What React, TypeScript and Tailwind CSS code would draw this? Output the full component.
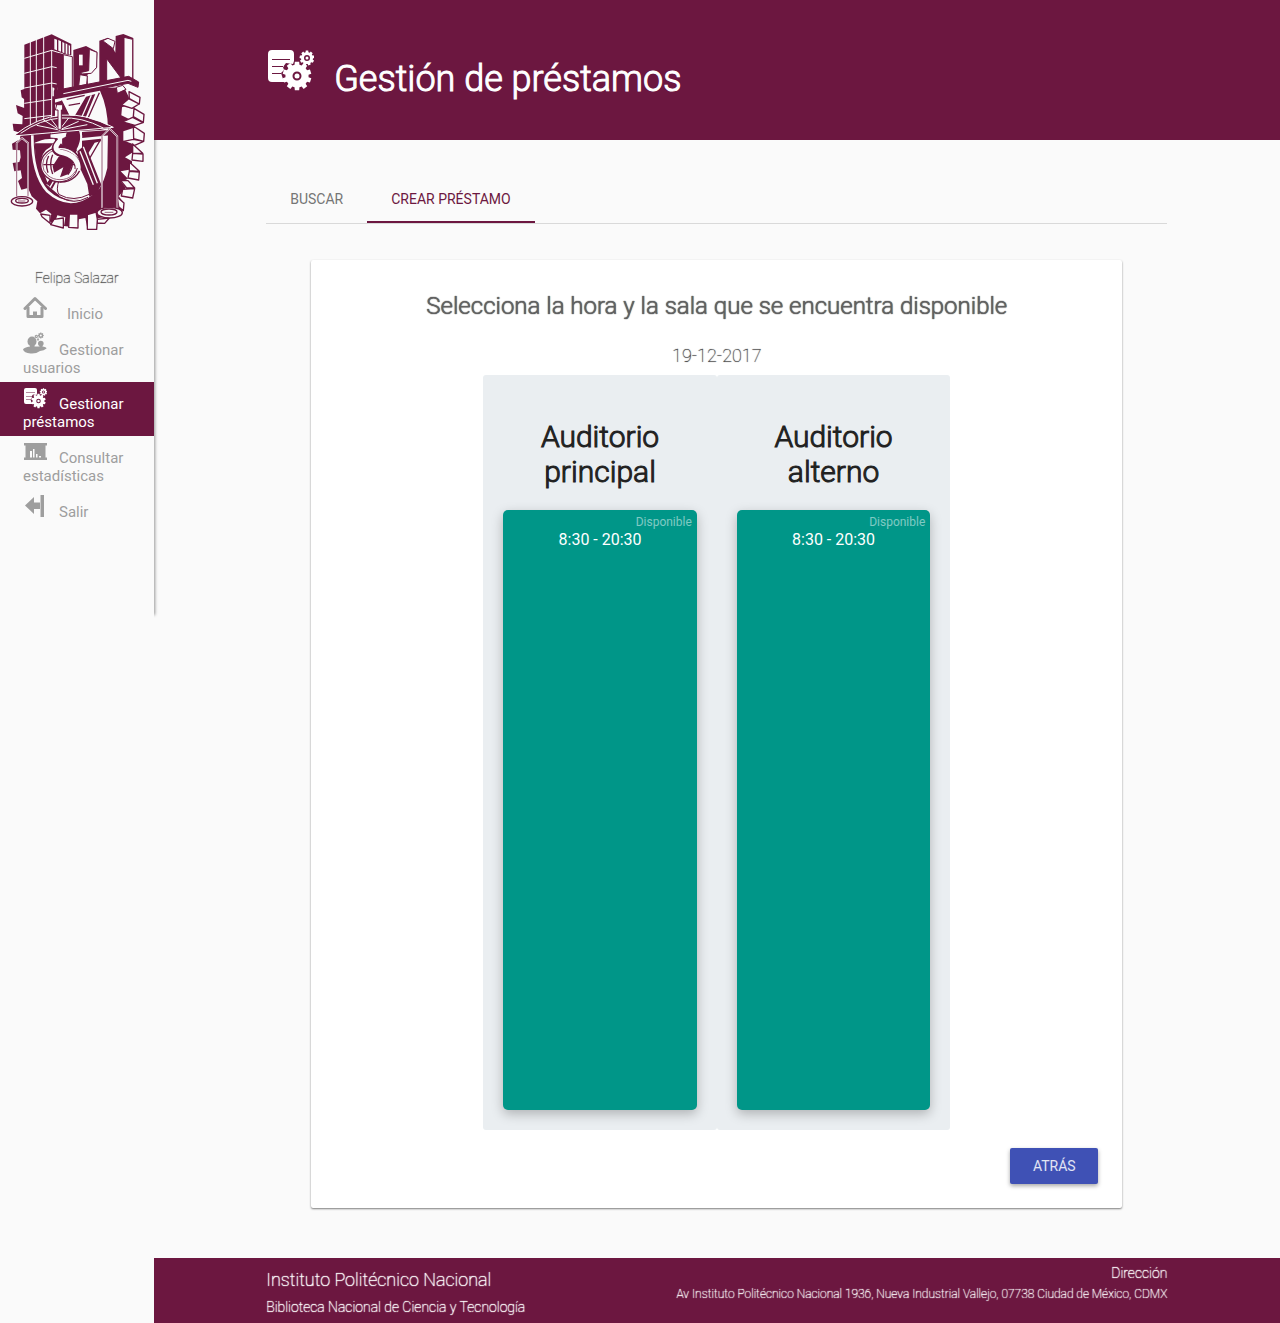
import type { ReactNode } from "react";

const WINE = "#6c1740";
const PAPER = "#fafafa";

/* Institute crest: tower, lettering, gear and balance. */
function Crest() {
  return (
    <svg viewBox="0 0 450 630" className="block w-[150px]" role="img" aria-label="IPN" strokeLinejoin="round">
      {/* gear body */}
      <path
        fill={WINE}
        d="M73 183 62 187 65 208 73 214V240L48 231 53 256 68 264 67 289 38 287 41 308 62 315 60 334 36 347 38 365 60 367 62 388 58 402 38 405 43 430 62 427 66 450 54 459 64 485 84 480 95 505 112 520 108 542 120 556 138 545 154 558 149 580 163 588 172 562 196 568 192 594 232 599 236 574 256 570 262 602 288 604 286 572 310 568 330 560 366 550 372 525 356 505 378 480 364 462 384 452 362 430 396 424 396 400 375 388 400 372 398 345 370 338 370 310 400 300 398 278 364 262 366 238 392 228 386 206 372 178 310 180 165 205Z"
      />
      {/* gear teeth, side faces */}
      <g fill={PAPER} stroke={WINE} strokeWidth="4">
        <path d="M387 191 420 208 418 228 388 212ZM386 212 417 228 396 241 364 231ZM402 241 432 259 430 283 400 266ZM398 268 429 284 405 292 368 282ZM400 294 433 316 431 340 401 332ZM400 334 431 340 404 352 371 340ZM398 376 429 378 429 400 396 396ZM398 348 428 376 398 376ZM388 402 418 430 388 428ZM388 430 418 432 416 456 384 450ZM362 458 384 458 404 480 380 480ZM368 484 404 482 398 510 364 504ZM352 508 372 525 370 548 356 536Z" />
        <path d="M122 558 150 562 150 586 126 566ZM162 574 190 570 190 600 152 590ZM208 558 234 558 234 600 206 598ZM262 560 288 552 292 574 290 604 262 604ZM292 574 328 570 314 586 292 585Z" />
      </g>
      {/* shield field */}
      <path fill={PAPER} d="M165 214 300 188Q324 240 324 306L322 420Q312 462 298 482L268 500Q220 520 176 500L140 470Q108 420 104 344L165 322Z" />
      <path fill={WINE} d="M104 346H160L150 358Q124 370 122 410L145 470 130 466Q106 420 104 346ZM104 316 160 318 160 332 104 336ZM246 312 330 306 330 322 246 330ZM246 338 302 332V340L284 344 262 380 246 362Z" />
      <path fill="none" stroke={PAPER} strokeWidth="8" d="M97 322Q96 440 142 490 208 550 277 496" />
      {/* ribbons inside the shield */}
      <path fill={WINE} d="M258 206 286 198 248 290 212 284ZM164 224 184 218 214 274 186 276ZM160 318 234 300Q252 330 228 372L244 400 176 380ZM232 370 256 350 304 470 290 496 268 506 262 468 240 420ZM140 466 168 430 178 444 156 484Z" />
      <path fill="none" stroke={PAPER} strokeWidth="6" d="M226 282Q258 322 232 366" />
      <path fill="none" stroke={WINE} strokeWidth="4" d="M298 194 258 284M184 218 210 270H236L264 208M200 214 254 202M206 232 240 226M302 334 266 396 298 470" />
      <path fill="none" stroke={PAPER} strokeWidth="4" d="M274 202 238 284M250 356 292 466M240 370 280 470M150 478 172 440" />
      <path fill={PAPER} d="M188 456Q176 488 178 504 218 528 264 504 268 476 242 442Z" />
      <path fill="none" stroke={WINE} strokeWidth="3" d="M178 454Q166 488 178 500 220 524 270 498M182 508Q220 532 264 508" />
      {/* tower */}
      <path fill={WINE} d="M73 50 155 19 214 48V82L188 78 172 190 163 205V318L73 316Z" />
      <path fill="none" stroke={PAPER} strokeWidth="3" d="M91 42V316M109 35V316M131 26V316M155 66V318M73 91 155 67 190 78M73 136 155 116 170 119M73 180 155 165 170 168M73 226 155 214M73 272 155 262" />
      <path fill={PAPER} d="M163 32 171 35V67L163 64ZM175 36 183 40V71L175 68ZM187 42 193 45V76L187 73ZM197 46 202 49V78L197 77ZM206 51 210 53V80L206 79ZM157 178 163 180V205H157Z" />
      {/* lettering */}
      <path fill={WINE} d="M172 75 190 78V184L172 190ZM220 66 258 54 292 72 290 120 262 140 264 172 220 182ZM298 38 324 29 346 74 347 24 370 18 400 30V154L298 164Z" />
      <path fill={PAPER} stroke={WINE} strokeWidth="3" d="M190 80 217 86V180L190 186ZM268 64 291 73 290 118 274 136 246 138 240 134 266 128ZM240 140 262 144 260 170 236 174ZM372 28 398 34V158L372 150ZM320 92 366 154 320 164ZM308 38 324 31 345 40 340 62Z" />
      <path fill={PAPER} d="M237 80H248V112H237Z" />
      <path fill={WINE} stroke={WINE} strokeWidth="3" d="M163 188 386 145 416 162 414 178 384 166 163 210Z" />
      <path fill="none" stroke={PAPER} strokeWidth="3" d="M190 197 384 157 394 160" />
      <path fill={PAPER} stroke={WINE} strokeWidth="3" d="M349 178 368 172 378 184 352 196Z" />
      {/* balance */}
      <path fill={WINE} d="M44 322Q180 216 336 298L300 306 180 312Z" />
      <path fill="none" stroke={PAPER} strokeWidth="3" d="M40 324Q180 212 340 298L178 312ZM62 316Q180 232 310 300M178 306 128 274M178 306 152 272M178 306 206 270M178 306 236 280M178 306 110 292M178 306 262 290" />
      <path fill={PAPER} stroke={WINE} strokeWidth="3" d="M170 230H188V246H184V304H174V246H166ZM150 318 202 312 198 328 188 332V350H172V332L150 330Z" />
      <path fill="none" stroke={PAPER} strokeWidth="5" d="M50 505V345L66 330 84 345V505M306 540V325L329 302 352 325V540" />
      <path fill="none" stroke={WINE} strokeWidth="2" d="M50 505V345L66 330 84 345V505M306 540V325L329 302 352 325V540" />
      {/* globe */}
      <ellipse cx="182" cy="410" rx="60" ry="52" fill={PAPER} stroke={WINE} strokeWidth="4" />
      <ellipse cx="180" cy="410" rx="52" ry="45" fill="none" stroke={WINE} strokeWidth="2" />
      <path fill={WINE} d="M176 386 200 372 224 392 206 438 180 448 190 418 162 434 158 414Z" />
      <path fill="none" stroke={WINE} strokeWidth="4" d="M130 410H232M146 384Q134 406 144 434M158 380Q146 406 158 438M210 392Q226 412 204 440" />
      {/* serpent */}
      <path fill="none" stroke={WINE} strokeWidth="21" d="M178 340Q154 362 176 374 238 386 234 424" />
      <path fill="none" stroke={PAPER} strokeWidth="15" d="M180 338Q156 362 180 372 240 384 234 428" />
      <path fill="none" stroke={WINE} strokeWidth="3" d="M232 420Q226 456 180 462" />
      {/* pans */}
      <g fill={PAPER} stroke={WINE} strokeWidth="4">
        <ellipse cx="66" cy="520" rx="32" ry="14" />
        <ellipse cx="66" cy="518" rx="19" ry="7" />
        <ellipse cx="329" cy="554" rx="38" ry="16" />
        <ellipse cx="327" cy="552" rx="24" ry="9" />
        <path d="M54 519H76M314 553H340" strokeWidth="2" />
      </g>
    </svg>
  );
}

function GearShape({ cx, cy, r, teeth, hole }: { cx: number; cy: number; r: number; teeth: number; hole: number }) {
  const points: string[] = [];
  for (let i = 0; i < teeth; i++) {
    const step = (Math.PI * 2) / teeth;
    const mid = i * step - Math.PI / 2;
    for (const [offset, radius] of [[-0.34, 0.8], [-0.24, 1], [0.24, 1], [0.34, 0.8]]) {
      const a = mid + offset * step;
      points.push(`${(cx + Math.cos(a) * r * radius).toFixed(2)} ${(cy + Math.sin(a) * r * radius).toFixed(2)}`);
    }
  }
  return (
    <path
      fillRule="evenodd"
      d={`M${points.join("L")}ZM${cx - hole} ${cy}a${hole} ${hole} 0 1 0 ${hole * 2} 0a${hole} ${hole} 0 1 0 ${-hole * 2} 0Z`}
    />
  );
}

function LoansIcon({ className }: { className: string }) {
  return (
    <svg viewBox="0 0 48 48" className={className} fill="currentColor" aria-hidden="true">
      <path
        fillRule="evenodd"
        d="M6 4H24Q28 4 28 8V15L27 18 20 17 17 21 18 24 15 27 17 33 20 36H6Q2 36 2 32V8Q2 4 6 4ZM6 13V14H24V13ZM6 20V21H18V20ZM6 27V28H15V27Z"
      />
      <GearShape cx={31} cy={30} r={14.500} teeth={10} hole={4.500} />
      <circle cx="31" cy="30" r="2.500" />
      <GearShape cx={41} cy={12} r={7.500} teeth={9} hole={3} />
      <circle cx="41" cy="12" r="1.500" />
    </svg>
  );
}

const navIcon = "inline-block size-6 align-[-1px]";

function HomeIcon() {
  return (
    <svg viewBox="0 0 24 24" className={navIcon} fill="none" stroke="currentColor" strokeWidth="3" aria-hidden="true">
      <path d="M2 12.500 12 2.500 22.500 12.500" strokeLinecap="round" strokeLinejoin="round" />
      <path d="M5 11V20.500H19V11" strokeLinejoin="round" />
      <path d="M10 20.500V15.500H14V20.500Z" fill="currentColor" stroke="none" />
    </svg>
  );
}

function UsersIcon() {
  return (
    <svg viewBox="0 0 24 24" className={navIcon} fill="currentColor" aria-hidden="true">
      <ellipse cx="9" cy="9.500" rx="4.500" ry="5" />
      <path d="M7 13H11.500V16H7Z" />
      <path d="M0 17.500Q1 15.500 7 14.500H19Q23.500 15 23.500 16.500 21 18.500 17 19 13 22 7.500 21.500 1 21 0 17.500Z" />
      <circle cx="17.800" cy="11.500" r="2.800" />
      <path d="M16.500 13H19.500V16H16.500Z" />
      <GearShape cx={17.800} cy={3.500} r={3} teeth={8} hole={1} />
      <GearShape cx={13.300} cy={4.500} r={1.800} teeth={7} hole={0.500} />
      <GearShape cx={15} cy={7.500} r={1.200} teeth={7} hole={0.300} />
    </svg>
  );
}

function StatsIcon() {
  return (
    <svg viewBox="0 0 24 24" className={navIcon} fill="currentColor" aria-hidden="true">
      <path
        fillRule="evenodd"
        d="M1 3H24V5.500H22.500V17.500H24V20H1V17.500H2.500V5.500H1ZM7 11V17.500H9V11ZM10 9V17.500H11.500V9ZM13 14V17.500H14.500V14ZM16 16V17.500H18V16Z"
      />
    </svg>
  );
}

function ExitIcon() {
  return (
    <svg viewBox="0 0 24 24" className={navIcon} fill="currentColor" aria-hidden="true">
      <path d="M2 11.500 11 3V8.500H17V15H11V20ZM17.500 1H21V23H17.500Z" />
    </svg>
  );
}

type NavEntry = { label: string; icon: ReactNode; active?: boolean; wide?: boolean };

const navEntries: NavEntry[] = [
  { label: "Inicio", icon: <HomeIcon />, wide: true },
  { label: "Gestionar usuarios", icon: <UsersIcon /> },
  { label: "Gestionar préstamos", icon: <LoansIcon className={navIcon} />, active: true },
  { label: "Consultar estadísticas", icon: <StatsIcon /> },
  { label: "Salir", icon: <ExitIcon /> },
];

const rooms = [
  { name: "Auditorio principal", slot: "8:30 - 20:30", status: "Disponible" },
  { name: "Auditorio alterno", slot: "8:30 - 20:30", status: "Disponible" },
];

function Sidebar() {
  return (
    <aside className="h-[619px] w-[12%] shrink-0 shadow-[3px_-2px_3px_-2px_rgba(0,0,0,0.4)]">
      <div className="pt-7">
        <Crest />
      </div>
      <p className="mt-8 text-center text-sm leading-4 font-thin text-[#424242] [text-shadow:0_0_1px_currentColor]">Felipa Salazar</p>
      <nav className="mt-1.5 text-[15px] leading-[18px]">
        {navEntries.map((entry) => (
          <a
            key={entry.label}
            href="#"
            className={
              entry.active
                ? "block bg-[#6c1740] px-[23px] pt-1 pb-[5px] text-white"
                : "block px-[23px] pt-1 pb-[5px] text-[#9e9e9e]"
            }
          >
            <span className={entry.wide ? "mr-5" : "mr-3"}>{entry.icon}</span>
            {entry.label}
          </a>
        ))}
      </nav>
    </aside>
  );
}

function RoomColumn({ name, slot, status }: { name: string; slot: string; status: string }) {
  return (
    <section className="flex-1 rounded-[3px] bg-[#eaeef1] p-5">
      <h2 className="mt-6 mb-[21px] text-center text-[30px] leading-[35px] font-light text-[#212121] [-webkit-text-stroke:1px_currentColor]">
        {name}
      </h2>
      <button
        type="button"
        className="flex h-[600px] w-full flex-col rounded-[5px] bg-[#009688] px-[5px] pt-1 text-white shadow-[0_4px_12px_rgba(0,0,0,0.25)]"
      >
        <span className="self-end text-xs leading-4 text-white/50">{status}</span>
        <span className="self-center text-base leading-5">{slot}</span>
      </button>
    </section>
  );
}

export default function App() {
  return (
    <div className="flex min-h-screen items-start bg-[#fafafa] font-[Roboto,'Liberation_Sans',sans-serif]">
      <Sidebar />
      <div className="flex min-h-screen min-w-0 flex-1 flex-col">
        <header className="h-[140px] bg-[#6c1740] text-white">
          <div className="mx-auto flex w-4/5 gap-5 pt-[46px]">
            <LoansIcon className="size-12" />
            <h1 className="pt-3 text-[36px] leading-[42px] font-light [-webkit-text-stroke:1px_currentColor]">Gestión de préstamos</h1>
          </div>
        </header>

        <main className="mx-auto w-4/5 pt-9">
          <div role="tablist" className="flex border-b border-[#d9d9d9] text-sm">
            <button type="button" role="tab" aria-selected="false" className="h-[47px] border-b-2 border-transparent px-6 text-[#757575]">
              BUSCAR
            </button>
            <button type="button" role="tab" aria-selected="true" className="h-[47px] border-b-2 border-[#6c1740] px-6 text-[#6c1740]">
              CREAR PRÉSTAMO
            </button>
          </div>

          <section className="mx-auto mt-9 w-[90%] rounded-[2px] bg-white p-6 shadow-[0_1px_2px_rgba(0,0,0,0.5)]">
            <h2 className="pt-1.5 text-center text-2xl leading-8 font-light text-[#616161] [text-shadow:0_0_1px_currentColor,0_0_1px_currentColor]">
              Selecciona la hora y la sala que se encuentra disponible
            </h2>
            <p className="mt-6 text-center text-lg leading-5 font-thin text-[#424242] [text-shadow:0_0_1px_currentColor]">19-12-2017</p>
            <div className="mx-auto mt-[9px] flex w-[467px] max-w-full">
              {rooms.map((room) => (
                <RoomColumn key={room.name} {...room} />
              ))}
            </div>
            <div className="mt-[18px] flex justify-end">
              <button
                type="button"
                className="h-9 w-[88px] rounded-[2px] bg-[#3f51b5] text-sm text-white/85 shadow-[0_2px_4px_rgba(0,0,0,0.35)]"
              >
                ATRÁS
              </button>
            </div>
          </section>
        </main>

        <footer className="mt-auto h-[65px] bg-[#6c1740] font-thin text-white [text-shadow:0_0_1px_currentColor,0_0_1px_currentColor]">
          <div className="mx-auto flex w-4/5 justify-between">
            <div>
              <p className="pt-3 text-lg leading-5">Instituto Politécnico Nacional</p>
              <p className="mt-[7px] text-sm leading-5">Biblioteca Nacional de Ciencia y Tecnología</p>
            </div>
            <address className="text-right not-italic">
              <p className="pt-[5px] text-sm leading-5">Dirección</p>
              <p className="text-xs leading-[22px]">
                Av Instituto Politécnico Nacional 1936, Nueva Industrial Vallejo, 07738 Ciudad de México, CDMX
              </p>
            </address>
          </div>
        </footer>
      </div>
    </div>
  );
}
